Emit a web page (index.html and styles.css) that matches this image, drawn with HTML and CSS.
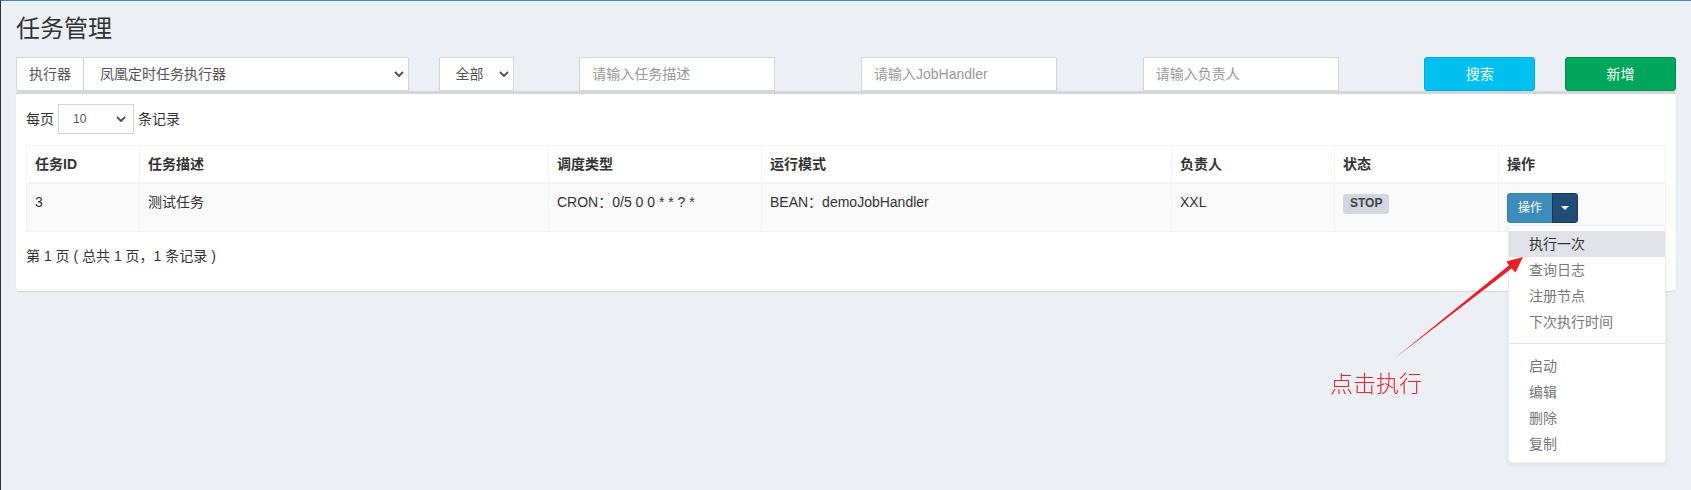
FILE: index.html
```html
<!DOCTYPE html>
<html lang="zh-CN">
<head>
<meta charset="utf-8">
<title>任务管理</title>
<link rel="stylesheet" href="styles.css">
</head>
<body>
<section class="content-header">
  <h1>任务管理</h1>
</section>
<section class="content">
  <div class="filter-row">
    <div class="col c3">
      <div class="input-group">
        <span class="addon">执行器</span>
        <div class="select sel-exec"><span>凤凰定时任务执行器</span><svg class="chev" width="10" height="6" viewBox="0 0 10 6"><path d="M1 1 L5 5 L9 1" fill="none" stroke="#555" stroke-width="2"/></svg></div>
      </div>
    </div>
    <div class="col c1">
      <div class="select sel-status"><span>全部</span><svg class="chev" width="10" height="6" viewBox="0 0 10 6"><path d="M1 1 L5 5 L9 1" fill="none" stroke="#555" stroke-width="2"/></svg></div>
    </div>
    <div class="col c2"><input class="form-input" type="text" placeholder="请输入任务描述"></div>
    <div class="col c2"><input class="form-input" type="text" placeholder="请输入JobHandler"></div>
    <div class="col c2"><input class="form-input" type="text" placeholder="请输入负责人"></div>
    <div class="col c1"><button class="btn btn-info" type="button">搜索</button></div>
    <div class="col c1"><button class="btn btn-success" type="button">新增</button></div>
  </div>

  <div class="box">
    <div class="box-body">
      <div class="length">
        <span>每页</span>
        <div class="select sel-len"><span>10</span><svg class="chev" width="10" height="6" viewBox="0 0 10 6"><path d="M1 1 L5 5 L9 1" fill="none" stroke="#555" stroke-width="2"/></svg></div>
        <span>条记录</span>
      </div>
      <table class="job-table">
        <colgroup>
          <col style="width:113px"><col style="width:409px"><col style="width:213px"><col style="width:410px"><col style="width:163px"><col style="width:164px"><col style="width:167px">
        </colgroup>
        <thead>
          <tr><th>任务ID</th><th>任务描述</th><th>调度类型</th><th>运行模式</th><th>负责人</th><th>状态</th><th>操作</th></tr>
        </thead>
        <tbody>
          <tr>
            <td>3</td>
            <td>测试任务</td>
            <td>CRON：0/5 0 0 * * ? *</td>
            <td>BEAN：demoJobHandler</td>
            <td>XXL</td>
            <td><span class="label">STOP</span></td>
            <td>
              <div class="btn-group">
                <button class="btn-sm btn-primary" type="button">操作</button>
                <button class="btn-sm btn-toggle" type="button"><span class="caret"></span></button>
                <ul class="dropdown-menu">
                  <li class="hover">执行一次</li>
                  <li>查询日志</li>
                  <li>注册节点</li>
                  <li>下次执行时间</li>
                  <li class="divider"></li>
                  <li>启动</li>
                  <li>编辑</li>
                  <li>删除</li>
                  <li>复制</li>
                </ul>
              </div>
            </td>
          </tr>
        </tbody>
      </table>
      <div class="info">第 1 页 ( 总共 1 页，1 条记录 )</div>
    </div>
  </div>
</section>

<svg class="annot-arrow" width="1691" height="490" viewBox="0 0 1691 490">
  <polygon points="1395,358 1509.2,265.3 1506.3,261.5 1523,257 1515.5,272.5 1511.6,268.5" fill="#ec1c24"/>
</svg>
<div class="annot-text">点击执行</div>
</body>
</html>
```

FILE: styles.css
```css
* { box-sizing: border-box; }

html, body { margin: 0; padding: 0; }

body {
  background: #ecf0f5;
  font-family: "Liberation Sans", "Noto Sans CJK SC", sans-serif;
  font-size: 14px;
  line-height: 20px;
  color: #333;
  border-top: 1px solid #3c8dbc;
  border-left: 1px solid #2c3135;
  height: 490px;
  overflow: hidden;
}

.content-header { padding: 15px 15px 0; }
.content-header h1 {
  margin: 0;
  font-size: 24px;
  line-height: 26px;
  font-weight: 400;
  color: #333;
}

.content { padding: 15px 15px 0; }

.filter-row { display: flex; margin: 0 -15px; }
.col { padding: 0 15px; }
.c1 { width: 8.33333%; }
.c2 { width: 16.66667%; }
.c3 { width: 25%; }

.input-group { display: flex; height: 34px; }
.addon {
  display: flex;
  align-items: center;
  padding: 0 12px;
  background: #fff;
  border: 1px solid #d2d6de;
  border-right: 0;
  color: #555;
}

.select {
  display: flex;
  align-items: center;
  justify-content: space-between;
  height: 34px;
  background: #fff;
  border: 1px solid #d2d6de;
  padding: 0 4px 0 16px;
  color: #555;
}
.chev { display: block; flex: none; }
.sel-exec { flex: 1; }
.sel-status { width: 75px; }

.form-input {
  display: block;
  width: 196px;
  height: 34px;
  border: 1px solid #d2d6de;
  padding: 6px 12px;
  font: inherit;
  color: #555;
  background: #fff;
  outline: none;
}
.form-input::placeholder { color: #999; }

.btn {
  display: block;
  width: 100%;
  height: 34px;
  border: 1px solid;
  border-radius: 3px;
  color: #fff;
  font: inherit;
  padding: 6px 12px;
}
.btn-info { background: #00c0ef; border-color: #00acd6; }
.btn-success { background: #00a65a; border-color: #008d4c; }

.box {
  background: #fff;
  border-top: 3px solid #d2d6de;
  border-radius: 3px;
  box-shadow: 0 1px 1px rgba(0, 0, 0, 0.1);
}
.box-body { padding: 10px 10px 10px; }

.length { display: flex; align-items: center; gap: 4px; height: 30px; }
.sel-len {
  width: 76px;
  height: 30px;
  font-size: 12px;
  padding: 0 7px 0 14px;
}

.job-table {
  width: 100%;
  margin-top: 11px;
  border-collapse: collapse;
  table-layout: fixed;
  border: 1px solid #f4f4f4;
}
.job-table th, .job-table td {
  border: 1px solid #f4f4f4;
  padding: 8px;
  text-align: left;
  vertical-align: top;
  line-height: 20px;
  white-space: nowrap;
}
.job-table th { font-weight: 700; color: #333; border-bottom-width: 2px; }
.job-table tbody tr { background: #f9f9f9; }

.label {
  display: inline;
  background: #d2d6de;
  color: #444;
  font-size: 12px;
  font-weight: 700;
  line-height: 1;
  padding: 2.4px 7px 3.6px;
  border-radius: 3px;
}

.btn-group { position: relative; display: flex; margin-top: 1px; }
.btn-sm {
  height: 30px;
  font-family: inherit;
  font-size: 12px;
  line-height: 18px;
  color: #fff;
  border: 1px solid;
  padding: 5px 10px;
}
.btn-primary {
  background: #3c8dbc;
  border-color: #367fa9;
  border-radius: 3px 0 0 3px;
}
.btn-toggle {
  background: #204d74;
  border-color: #173a59;
  border-radius: 0 3px 3px 0;
  margin-left: -1px;
  padding: 5px 8px;
  display: flex;
  align-items: center;
}
.caret {
  display: block;
  width: 0;
  height: 0;
  border-top: 4px solid #fff;
  border-left: 4px solid transparent;
  border-right: 4px solid transparent;
}

.dropdown-menu {
  position: absolute;
  top: 100%;
  left: 1px;
  z-index: 10;
  width: 158px;
  margin: 2px 0 0;
  padding: 5px 0;
  list-style: none;
  background: #fff;
  border: 1px solid #eee;
  border-radius: 4px;
  box-shadow: 0 2px 4px rgba(0, 0, 0, 0.06);
}
.dropdown-menu li {
  padding: 3px 20px;
  line-height: 20px;
  color: #777;
  font-size: 14px;
}
.dropdown-menu li.hover { background: #e1e3e9; color: #333; }
.dropdown-menu li.divider {
  height: 1px;
  padding: 0;
  margin: 8px 0 9px;
  background: #e5e5e5;
}

.info { padding: 14px 0 15px; color: #333; }

.annot-arrow {
  position: fixed;
  left: 0;
  top: 0;
  pointer-events: none;
  z-index: 20;
}
.annot-text {
  position: fixed;
  left: 1330px;
  top: 371px;
  font-family: "Noto Sans CJK SC", sans-serif;
  font-weight: 300;
  font-size: 23px;
  line-height: 23px;
  color: #e8232b;
  z-index: 20;
}
```
